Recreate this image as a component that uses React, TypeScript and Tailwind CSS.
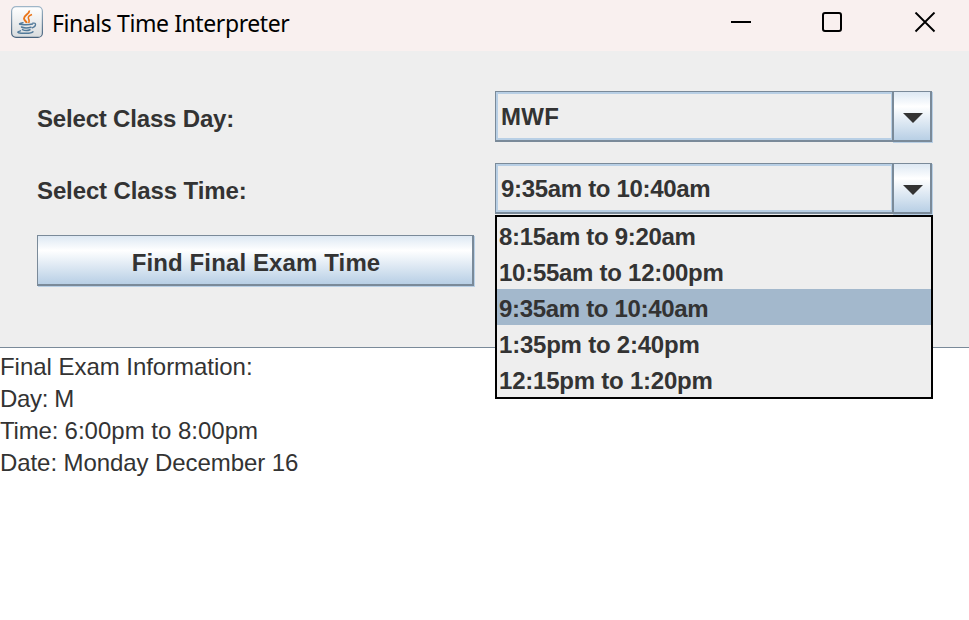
import { ReactNode } from "react";

const times = [
  { label: "8:15am to 9:20am", style: "tracking-[-0.3px]" },
  { label: "10:55am to 12:00pm", style: "tracking-[-0.27px]" },
  { label: "9:35am to 10:40am", style: "tracking-[-0.32px] bg-[#a3b8cc]" },
  { label: "1:35pm to 2:40pm", style: "tracking-[-0.22px]" },
  { label: "12:15pm to 1:20pm", style: "tracking-[-0.22px]" },
];

function JavaIcon() {
  return (
    <svg width="32" height="32" viewBox="0 0 32 32" fill="none">
      <defs>
        <linearGradient id="tile" x1="0" y1="0" x2="0" y2="1">
          <stop offset="0" stopColor="#ffffff" />
          <stop offset="1" stopColor="#d9dcde" />
        </linearGradient>
        <linearGradient id="rim" x1="0" y1="0" x2="0" y2="1">
          <stop offset="0" stopColor="#9fb6c8" />
          <stop offset="1" stopColor="#48637d" />
        </linearGradient>
      </defs>
      <rect x="0.6" y="0.6" width="30.8" height="30.8" rx="4.5" fill="url(#tile)" stroke="url(#rim)" strokeWidth="1.2" />
      <path d="M18.300 4.500C18.800 8 13 9 13 12.500c0 2 2.300 2.700 2.800 4.500" stroke="#ea7519" strokeWidth="1.900" />
      <path d="M21 8.500c-3 1-4.200 2.500-3.500 4.200.6 1.500 1.300 2 .2 4.300" stroke="#ea7519" strokeWidth="1.600" />
      <g stroke="#527a9a" strokeLinecap="round">
        <path d="M12 16.800c-7 1.400-2 2.200 3 2 2.500 0 4.800-.3 6.500-.8" strokeWidth="1.500" />
        <path d="M10.500 21c2 1.200 7 1.100 9.500.2" strokeWidth="1.500" />
        <path d="M11.500 23.600c2 1 5.500 1 7.500.1" strokeWidth="1.500" />
        <path d="M21.800 17.200c3.800-1 3.700 3.300-.6 4.600" strokeWidth="1.300" />
        <path d="M9.500 24.800c-6 1.700-1 2.600 5.500 2.500 3.500 0 6.200-.5 7-1.500" strokeWidth="1.400" />
      </g>
    </svg>
  );
}

function TitleBar() {
  return (
    <header className="flex h-[51px] shrink-0 items-start bg-[#f9f0ef] pl-[11px]">
      <div className="mt-1.5">
        <JavaIcon />
      </div>
      <h1 className="mt-[3px] ml-[9px] font-['Noto_Sans',sans-serif] text-[23px] leading-10 tracking-[-0.41px] whitespace-nowrap text-black">
        Finals Time Interpreter
      </h1>
      <svg className="mt-3 mr-[33px] ml-auto" width="206" height="22" viewBox="0 0 206 22" fill="none" stroke="#000" strokeWidth="2">
        <path d="M1 10H21" />
        <rect x="93" y="1" width="18" height="18" rx="2" />
        <path d="M185.500 0.500L204.500 19.500M204.500 0.500L185.500 19.500" strokeWidth="1.900" />
      </svg>
    </header>
  );
}

function ComboBox({ children }: { children: ReactNode }) {
  return (
    <div className="flex h-[51px] w-[437px]">
      <div className="flex w-[397px] items-center border-t border-b-2 border-l border-[#7a8a99]">
        <div className="flex h-full w-full items-center border-2 border-r-[1px] border-[#b8cfe5] pt-0.5 pl-[3px] text-2xl font-bold tracking-[-0.32px] whitespace-nowrap">
          {children}
        </div>
      </div>
      <div className="flex w-10 items-center justify-center border-t border-r-2 border-b-2 border-l-2 border-[#7a8a99] bg-linear-to-b from-[#dde8f3] via-white via-30% to-[#b8cfe5] pl-0.5 shadow-[1px_1px_0_#b8cfe5]">
        <svg className="mt-1" width="20" height="10" viewBox="0 0 20 10">
          <path d="M0 0H20L10 10Z" fill="#333" />
        </svg>
      </div>
    </div>
  );
}

export default function App() {
  return (
    <div className="flex h-[620px] w-[969px] flex-col overflow-hidden bg-white font-['Liberation_Sans',Arial,sans-serif] text-[#333]">
      <TitleBar />
      <main className="h-[297px] shrink-0 border-b border-[#7a8a99] bg-[#eee] pt-10 pl-[37px]">
        <div className="grid grid-cols-[437px_437px] gap-x-[21px] gap-y-[21px]">
          <label className="flex h-[51px] items-center pt-1 text-2xl font-bold tracking-[-0.18px]">Select Class Day:</label>
          <ComboBox>
            <span className="tracking-[0.3px]">MWF</span>
          </ComboBox>
          <label className="flex h-[51px] items-center pt-1 text-2xl font-bold tracking-[-0.12px]">Select Class Time:</label>
          <div className="relative">
            <ComboBox>9:35am to 10:40am</ComboBox>
            <ul className="absolute top-[52px] left-0 z-10 w-[438px] border-2 border-black bg-[#eee]">
              {times.map((t) => (
                <li key={t.label} className={`flex h-9 items-center pt-1 pl-0.5 text-2xl font-bold whitespace-nowrap ${t.style}`}>
                  {t.label}
                </li>
              ))}
            </ul>
          </div>
          <button className="h-[51px] w-[437px] border-t border-r-2 border-b-2 border-l border-[#7a8a99] bg-linear-to-b from-[#dde8f3] via-white via-30% to-[#b8cfe5] pt-1.5 pl-0.5 text-2xl font-bold tracking-[0.12px] shadow-[1px_1px_0_#b8cfe5]">
            Find Final Exam Time
          </button>
        </div>
      </main>
      <section className="pt-[3px] text-2xl leading-8">
        <p className="tracking-[-0.04px]">Final Exam Information:</p>
        <p className="tracking-[-0.35px]">Day: M</p>
        <p>
          <span className="tracking-[-0.2px]">Time: </span>6:00pm to 8:00pm
        </p>
        <p className="tracking-[-0.08px]">Date: Monday December 16</p>
      </section>
    </div>
  );
}
